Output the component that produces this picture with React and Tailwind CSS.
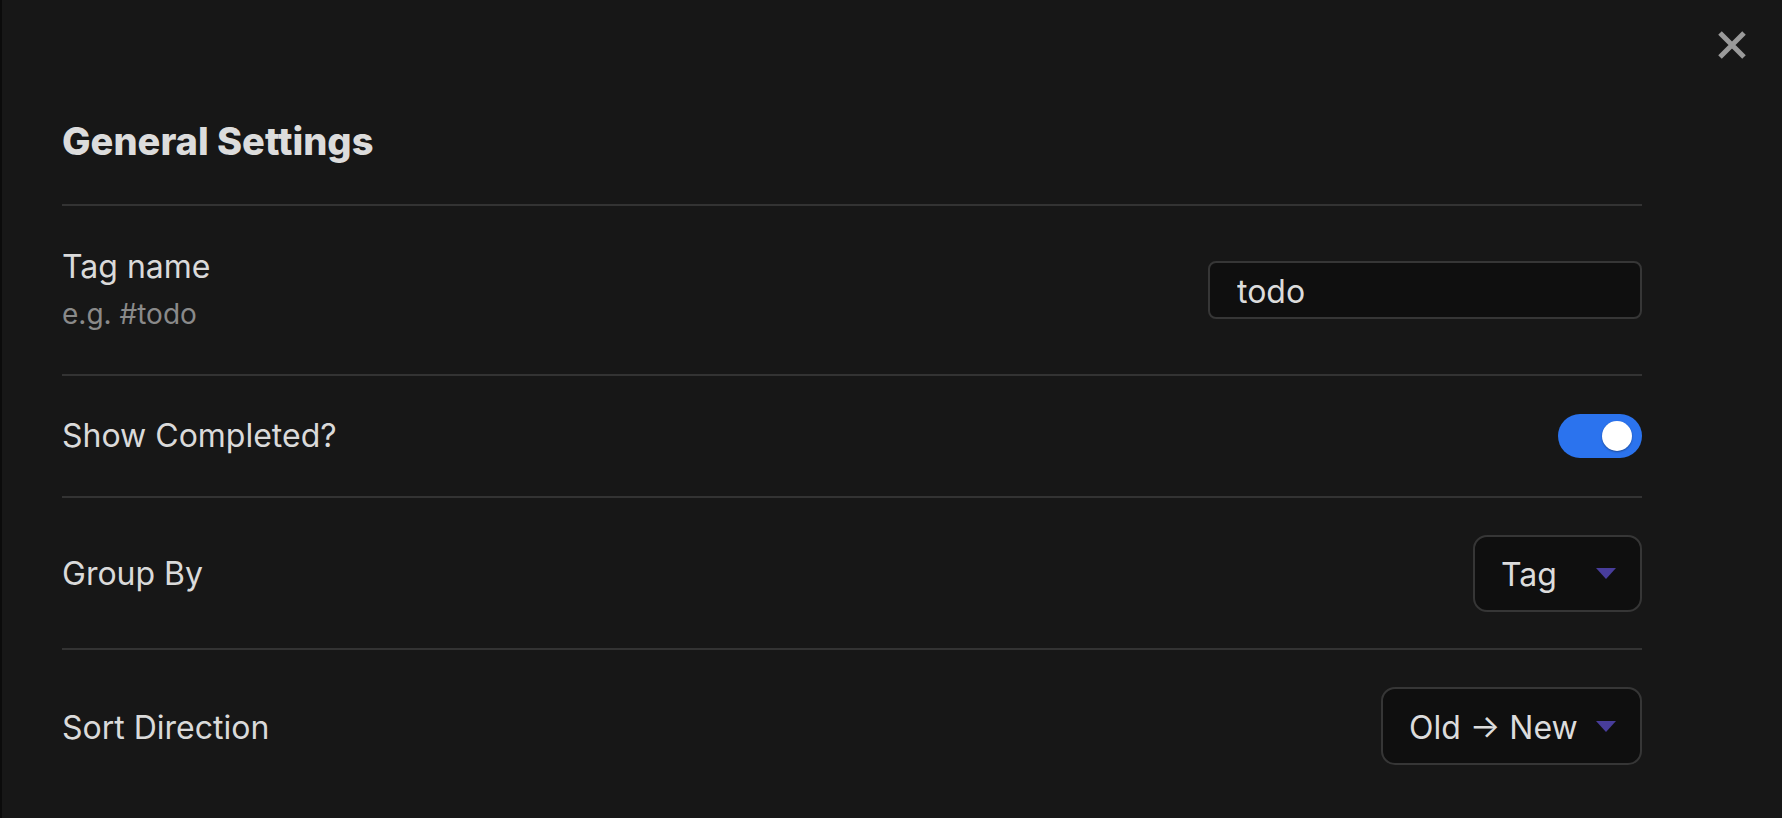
import React, { useState } from "react";

function Caret() {
  return (
    <svg width="20" height="11" viewBox="0 0 20 11" className="shrink-0">
      <polygon points="0,0 20,0 10,11" fill="#483d9b" />
    </svg>
  );
}

function Dropdown({ value, width }) {
  return (
    <div
      className={`flex items-center justify-between rounded-[14px] border-2 border-[#363636] bg-[#0f0f0f] pl-[26px] pr-[24px] text-[32px] leading-[40px] text-[#dcdcdc] ${width}`}
    >
      <span className="pt-[4px]">{value}</span>
      <Caret />
    </div>
  );
}

export default function App() {
  const [showCompleted, setShowCompleted] = useState(true);

  return (
    <div className="relative h-[818px] w-full overflow-hidden border-l-2 border-[#0b0b0b] bg-[#171717] font-[Inter,'Noto_Sans',sans-serif] text-[#dadada]">
      <button className="absolute right-[36px] top-[31px] text-[#9a9a9a]">
        <svg width="28" height="28" viewBox="0 0 28 28">
          <path d="M2 2 L26 26 M26 2 L2 26" stroke="currentColor" strokeWidth="5" />
        </svg>
      </button>

      <div className="mr-[140px] pl-[60px]">
        <div className="border-b-2 border-[#333] pb-[41px] pt-[119px]">
          <h2 className="text-[38px] font-extrabold leading-[44px] text-[#dcdcdc]">
            General Settings
          </h2>
        </div>

        <div className="flex h-[170px] items-center justify-between border-b-2 border-[#333]">
          <div>
            <p className="text-[32px] leading-[36px]">Tag name</p>
            <p className="mt-[12px] text-[28px] leading-[34px] text-[#8a8a8a]">e.g. #todo</p>
          </div>
          <input
            defaultValue="todo"
            className="h-[58px] w-[434px] rounded-[8px] border-2 border-[#363636] bg-[#0f0f0f] pl-[27px] pt-[2px] text-[32px] text-[#dcdcdc] outline-none"
          />
        </div>

        <div className="flex h-[122px] items-center justify-between border-b-2 border-[#333]">
          <p className="text-[32px] leading-[36px]">Show Completed?</p>
          <button
            onClick={() => setShowCompleted(!showCompleted)}
            className={`flex h-[44px] w-[84px] items-center rounded-full px-[10px] ${
              showCompleted ? "justify-end bg-[#2b73ee]" : "justify-start bg-[#3a3a3a]"
            }`}
          >
            <span className="h-[30px] w-[30px] rounded-full bg-white shadow-[0_1px_2px_rgba(0,0,0,0.35)]" />
          </button>
        </div>

        <div className="flex h-[152px] items-center justify-between border-b-2 border-[#333]">
          <p className="pt-[2px] text-[32px] leading-[36px]">Group By</p>
          <Dropdown value="Tag" width="h-[77px] w-[169px]" />
        </div>

        <div className="flex h-[152px] items-center justify-between">
          <p className="pt-[4px] text-[32px] leading-[36px]">Sort Direction</p>
          <Dropdown value="Old → New" width="h-[78px] w-[261px]" />
        </div>
      </div>
    </div>
  );
}
